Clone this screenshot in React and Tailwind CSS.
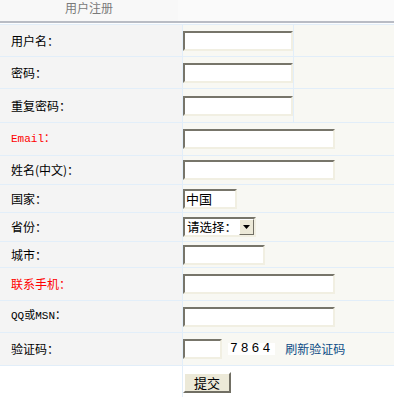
import React from "react";

const font = { fontFamily: '"Noto Sans CJK SC", "Noto Sans", sans-serif' };

const inset =
  "bg-white border-2 border-t-[#77756a] border-l-[#77756a] border-b-[#f1efe2] border-r-[#f1efe2]";

function Input({ w, value }) {
  return (
    <div className={`${inset} ${w} h-[20px] text-[13px] leading-[16px] text-black px-px`}>
      {value}
    </div>
  );
}

const rows = [
  { label: "用户名：", h: "h-[32px]", w: "w-[110px]", third: true },
  { label: "密码：", h: "h-[32px]", w: "w-[110px]", third: true },
  { label: "重复密码：", h: "h-[34px]", w: "w-[110px]", third: true },
  { label: "Email：", h: "h-[33px]", w: "w-[152px]", red: true, mono: true },
  { label: "姓名(中文)：", h: "h-[29px]", w: "w-[152px]" },
  { label: "国家：", h: "h-[28px]", w: "w-[54px]", value: "中国" },
  { label: "省份：", h: "h-[29px]", select: true },
  { label: "城市：", h: "h-[26px]", w: "w-[82px]" },
  { label: "联系手机：", h: "h-[33px]", w: "w-[152px]", red: true },
  { label: "QQ或MSN：", h: "h-[32px]", w: "w-[152px]", mono: true },
  { label: "验证码：", h: "h-[33px]", captcha: true },
];

export default function App() {
  return (
    <div className="w-[394px] h-[397px] overflow-hidden bg-[#f8f8f3] text-[12px]" style={font}>
      {/* header */}
      <div className="flex h-[21px] bg-[#f8f8f8]">
        <div className="w-[178px] flex justify-center items-start">
          <span className="text-[12px] text-[#7a7a7a] leading-[16px]">用户注册</span>
        </div>
        <div className="flex-1 bg-[#fafafa]" />
      </div>
      <div className="h-[2px] bg-[#b9bcc4]" />
      <div className="h-px bg-[#fbfdff]" />

      <div className="border-t border-[#e2eef9]">
        {rows.map((r, i) => (
          <div key={i} className={`flex ${r.h} border-b border-[#e2eef9]`}>
            <div className="w-[183px] shrink-0 bg-[#f4f4f4] border-r border-[#e2eef9] flex items-center pl-[11px]">
              <span
                className={r.red ? "text-[#ff0000]" : "text-black"}
                style={r.mono ? { fontFamily: '"Liberation Mono", "Noto Sans CJK SC", monospace', fontSize: "11px" } : undefined}
              >
                {r.label}
              </span>
            </div>
            {r.third ? (
              <>
                <div className="w-[111px] shrink-0 flex items-center border-r border-[#e2eef9]">
                  <Input w={r.w} />
                </div>
                <div className="flex-1" />
              </>
            ) : r.select ? (
              <div className="flex-1 flex items-center">
                <div className={`${inset} w-[73px] h-[20px] flex items-center overflow-hidden`}>
                  <span className="flex-1 whitespace-nowrap text-[12.5px] leading-[16px] pl-[2px] text-black">请选择：</span>
                  <div className="w-[15px] h-[16px] shrink-0 bg-[#ece9d8] border border-t-white border-l-white border-b-[#716f64] border-r-[#716f64] flex items-center justify-center">
                    <svg width="7" height="4" viewBox="0 0 7 4">
                      <path d="M0 0h7L3.5 4z" fill="#000" />
                    </svg>
                  </div>
                </div>
              </div>
            ) : r.captcha ? (
              <div className="flex-1 flex items-center">
                <Input w="w-[39px]" />
                <span
                  className="ml-[6px] bg-white px-[2px] text-[13px] leading-[12px] tracking-[3px] text-black"
                  style={{ fontFamily: '"Liberation Mono", monospace' }}
                >
                  7864
                </span>
                <span className="ml-[10px] text-[#0b4c86] text-[12px]">刷新验证码</span>
              </div>
            ) : (
              <div className="flex-1 flex items-center">
                <Input w={r.w} value={r.value} />
              </div>
            )}
          </div>
        ))}
        <div className="flex h-[32px]">
          <div className="w-[183px] shrink-0 bg-white border-r border-[#e2eef9]" />
          <div className="flex-1 flex items-center bg-white">
            <button className="w-[48px] h-[21px] bg-[#ece9d8] border-2 border-t-white border-l-white border-b-[#716f64] border-r-[#716f64] text-[13px] leading-[15px] text-black">
              提交
            </button>
          </div>
        </div>
      </div>
    </div>
  );
}
